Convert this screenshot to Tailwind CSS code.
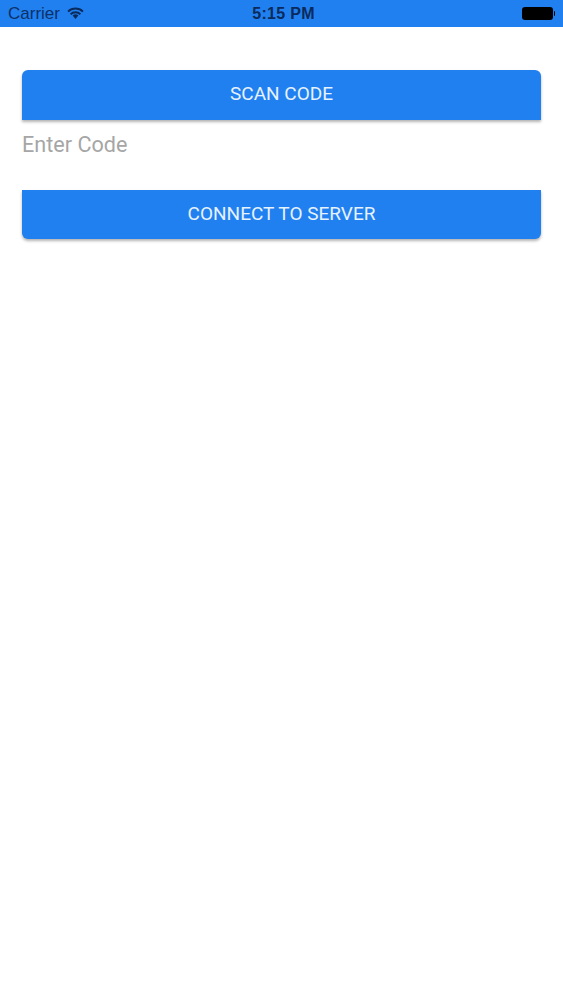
<!DOCTYPE html>
<html>
<head>
<meta charset="utf-8">
<script src="https://cdn.jsdelivr.net/npm/@tailwindcss/browser@4"></script>
</head>
<body class="bg-white font-['Roboto',sans-serif]">
<div class="w-[563px] h-[1000px] bg-white overflow-hidden">
  <div class="relative h-[27px] bg-[#2080f0] flex items-center justify-between pl-[8px] pr-[8px] text-[#0b2a5c] font-['Liberation_Sans',sans-serif]">
    <div class="flex items-center gap-[7px]">
      <span class="text-[17px] leading-[27px] text-[#0d3068]">Carrier</span>
      <svg width="17" height="12" viewBox="0 0 17 12" class="mb-[2px]"><path d="M8.5 12 L5.6 8.6 A4.4 4.4 0 0 1 11.4 8.6 Z" fill="#0b2a5c"/><path d="M1 4.6 A10.8 10.8 0 0 1 16 4.6" fill="none" stroke="#0b2a5c" stroke-width="1.9"/><path d="M3.6 7.2 A7 7 0 0 1 13.4 7.2" fill="none" stroke="#0b2a5c" stroke-width="1.9"/></svg>
    </div>
    <span class="absolute left-[4px] right-0 text-center text-[16px] leading-[27px] font-bold tracking-[0.3px]">5:15 PM</span>
    <div class="flex items-center gap-[1px]">
      <div class="w-[31px] h-[13px] bg-black rounded-[3px]"></div>
      <div class="w-[1.5px] h-[5px] bg-black rounded-r-sm"></div>
    </div>
  </div>
  <div class="pt-[43px] px-[22px]">
    <div class="h-[50px] pb-[2px] bg-[#2080f0] rounded-t-[6px] shadow-[0_2px_3px_rgba(0,0,0,0.3)] flex items-center justify-center text-[#e6f2ff] text-[19px]">SCAN CODE</div>
    <div class="h-[70px] pt-[10px] text-[#a6a6a6] text-[21.6px] leading-[30px]">Enter Code</div>
    <div class="h-[49px] bg-[#2080f0] rounded-b-[6px] shadow-[0_2px_3px_rgba(0,0,0,0.3)] flex items-center justify-center text-[#e6f2ff] text-[19px]">CONNECT TO SERVER</div>
  </div>
</div>
</body>
</html>
